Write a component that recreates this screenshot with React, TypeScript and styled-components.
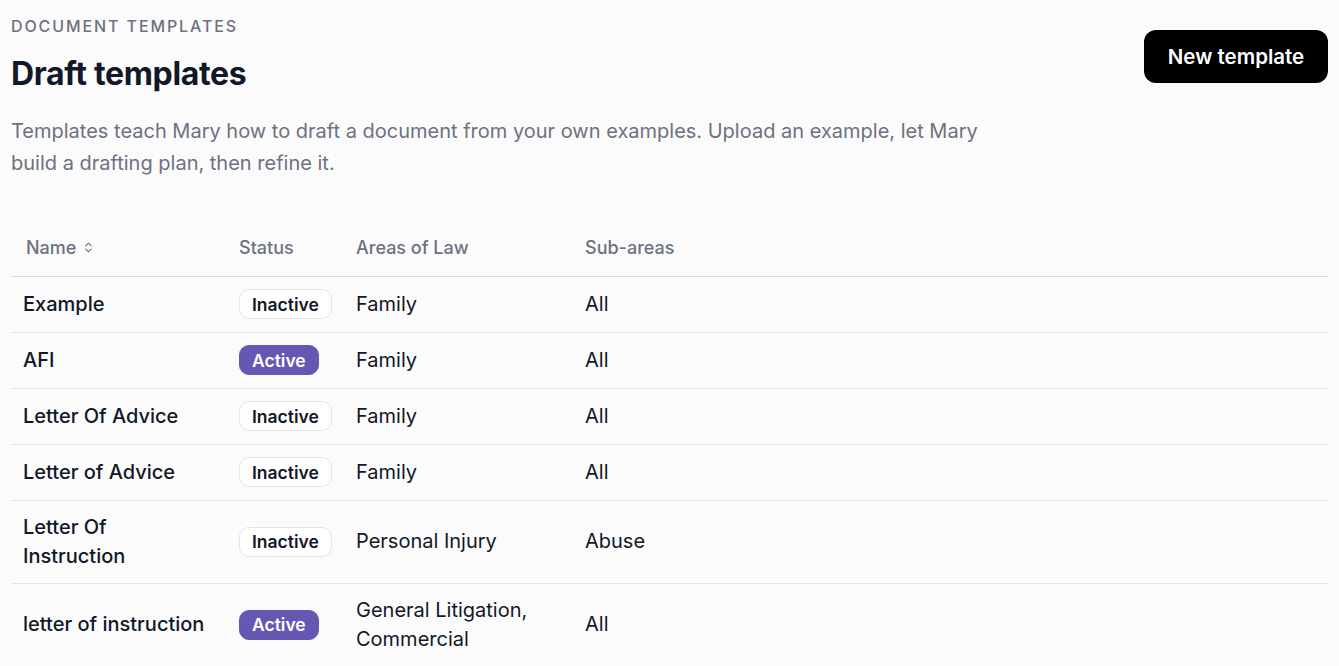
import styled, { createGlobalStyle } from "styled-components";
import { ChevronsUpDown } from "lucide-react";

interface ITemplate {
    name: string,
    active: boolean,
    areas: string,
    subAreas: string
}

const templates: ITemplate[] = [
    { name: "Example", active: false, areas: "Family", subAreas: "All" },
    { name: "AFI", active: true, areas: "Family", subAreas: "All" },
    { name: "Letter Of Advice", active: false, areas: "Family", subAreas: "All" },
    { name: "Letter of Advice", active: false, areas: "Family", subAreas: "All" },
    { name: "Letter Of Instruction", active: false, areas: "Personal Injury", subAreas: "Abuse" },
    { name: "letter of instruction", active: true, areas: "General Litigation, Commercial", subAreas: "All" },
];

const App = () => {
    return <>
        <GlobalStyle />
        <Page>
            <PageHeader>
                <div>
                    <Eyebrow>Document templates</Eyebrow>
                    <Title>Draft templates</Title>
                </div>
                <PrimaryButton>New template</PrimaryButton>
            </PageHeader>
            <Description>
                Templates teach Mary how to draft a document from your own examples. Upload an example, let Mary build a drafting plan, then refine it.
            </Description>
            <Table>
                <colgroup>
                    <col style={{ width: 216 }} />
                    <col style={{ width: 117 }} />
                    <col style={{ width: 229 }} />
                    <col />
                </colgroup>
                <thead>
                    <tr>
                        <HeadCell>
                            <SortButton>
                                Name <ChevronsUpDown size={13} strokeWidth={2} />
                            </SortButton>
                        </HeadCell>
                        <HeadCell>Status</HeadCell>
                        <HeadCell>Areas of Law</HeadCell>
                        <HeadCell>Sub-areas</HeadCell>
                    </tr>
                </thead>
                <tbody>
                    {templates.map((t, i) => (
                        <Row key={i}>
                            <NameCell>{t.name}</NameCell>
                            <Cell>
                                <StatusBadge $active={t.active}>{t.active ? "Active" : "Inactive"}</StatusBadge>
                            </Cell>
                            <Cell>{t.areas}</Cell>
                            <Cell>{t.subAreas}</Cell>
                        </Row>
                    ))}
                </tbody>
            </Table>
        </Page>
    </>
};

export default App;

const GlobalStyle = createGlobalStyle({
    'html, body': {
        margin: 0,
        background: '#fbfbfc',
    },
    body: {
        fontFamily: 'Inter, "Noto Sans", sans-serif',
        color: '#111827',
        WebkitFontSmoothing: 'antialiased',
    },
    '*': {
        boxSizing: 'border-box',
    }
});

const Page = styled.div({
    padding: '14px 11px 0 11px',
});

const PageHeader = styled.div({
    display: 'flex',
    justifyContent: 'space-between',
    alignItems: 'flex-start',
});

const Eyebrow = styled.div({
    fontSize: '16px',
    lineHeight: '24px',
    letterSpacing: '1.9px',
    textTransform: 'uppercase',
    color: '#6b7280',
    fontWeight: 500,
});

const Title = styled.h1({
    margin: '16px 0 0 0',
    fontSize: '32px',
    lineHeight: '40px',
    fontWeight: 700,
    letterSpacing: '-0.35px',
    color: '#111827',
});

const PrimaryButton = styled.button({
    marginTop: '16px',
    height: '53px',
    width: '184px',
    borderRadius: '12px',
    border: 'none',
    background: '#000',
    color: '#fff',
    fontFamily: 'inherit',
    fontSize: '20.5px',
    fontWeight: 600,
    cursor: 'pointer',
});

const Description = styled.p({
    margin: '21px 0 0 0',
    maxWidth: '1000px',
    fontSize: '20px',
    lineHeight: '32px',
    color: '#6b7280',
});

const Table = styled.table({
    marginTop: '40px',
    width: '100%',
    borderCollapse: 'collapse',
    tableLayout: 'fixed',
});

const HeadCell = styled.th({
    height: '57px',
    padding: '0 12px',
    textAlign: 'left',
    fontSize: '18px',
    fontWeight: 500,
    color: '#6b7280',
    borderBottom: '1px solid #dcdbe5',
});

const SortButton = styled.span({
    display: 'inline-flex',
    alignItems: 'center',
    gap: '6px',
    paddingLeft: '3px',
    '& svg': {
        color: '#6b7280',
    }
});

const Row = styled.tr({
    borderBottom: '1px solid #e6e5ed',
});

const Cell = styled.td({
    height: '56px',
    padding: '12px',
    fontSize: '20px',
    lineHeight: '29px',
    color: '#111827',
    verticalAlign: 'middle',
});

const NameCell = styled(Cell)({
    fontWeight: 500,
    paddingRight: '20px',
});

const StatusBadge = styled.span<{ $active: boolean }>(props => ({
    display: 'inline-flex',
    alignItems: 'center',
    height: '30px',
    padding: '0 12px',
    borderRadius: '10px',
    fontSize: '17.5px',
    fontWeight: 600,
    border: `1px solid ${props.$active ? '#6558b3' : '#e3e3ea'}`,
    background: props.$active ? '#6558b3' : '#ffffff',
    color: props.$active ? '#ffffff' : '#111827',
}));
